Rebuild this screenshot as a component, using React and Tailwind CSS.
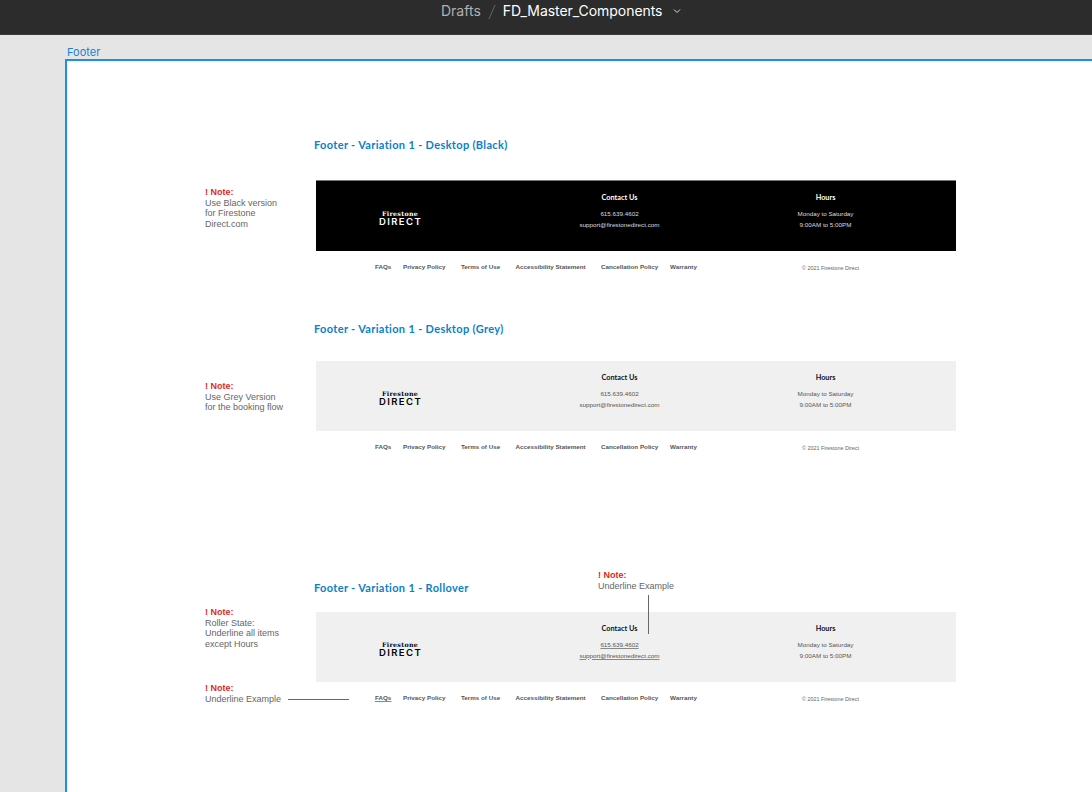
const sans = "font-['Liberation_Sans',Arial,sans-serif]";
const head = "font-['Lato','Open_Sans',sans-serif]";

function Logo({ light }) {
  return (
    <div className={`flex flex-col items-center leading-none gap-[1px] ${light ? "text-white" : "text-black"}`}>
      <span className="font-['DejaVu_Serif',serif] font-bold text-[6.3px] leading-[7px] tracking-[0.3px]">Firestone</span>
      <span className="font-['Inter',sans-serif] font-semibold text-[9.5px] leading-[8px] tracking-[1.4px] pl-[1px]">DIRECT</span>
    </div>
  );
}

function Bar({ variant, underline }) {
  const dark = variant === "dark";
  const t = dark ? "text-[#ddd]" : "text-[#555]";
  const h = dark ? "text-white" : "text-[#111]";
  const link = underline ? "underline underline-offset-1 decoration-[#888]" : "";
  return (
    <div className={`w-[640px] flex ${dark ? "h-[71px] bg-black border-t border-[#777]" : "h-[70px] bg-[#f0f0f0]"}`}>
      <div className="w-[168px] flex items-center justify-center pt-[3px]">
        <Logo light={dark} />
      </div>
      <div className="w-[271px] flex flex-col items-center pt-[12px]">
        <h3 className={`${head} ${h} font-bold text-[7.3px] leading-[10px]`}>Contact Us</h3>
        <p className={`${sans} ${t} text-[6.25px] leading-[11px] mt-[4.5px] ${link}`}>615.639.4602</p>
        <p className={`${sans} ${t} text-[6.25px] leading-[11px] ${link}`}>support@firestonedirect.com</p>
      </div>
      <div className="w-[141px] flex flex-col items-center pt-[12px]">
        <h3 className={`${head} ${h} font-bold text-[7.3px] leading-[10px]`}>Hours</h3>
        <p className={`${sans} ${t} text-[6.25px] leading-[11px] mt-[4.5px]`}>Monday to Saturday</p>
        <p className={`${sans} ${t} text-[6.25px] leading-[11px]`}>9:00AM to 5:00PM</p>
      </div>
    </div>
  );
}

function Links({ underline }) {
  const items = [
    ["FAQs", "w-[28px]"],
    ["Privacy Policy", "w-[58px]"],
    ["Terms of Use", "w-[54.5px]"],
    ["Accessibility Statement", "w-[85.5px]"],
    ["Cancellation Policy", "w-[69px]"],
    ["Warranty", "w-[132px]"],
  ];
  return (
    <div className={`${sans} flex items-start pl-[59px] mt-[12px] w-[640px] h-[12px] text-[#555]`}>
      {items.map(([label, w], i) => (
        <span
          key={label}
          className={`${w} shrink-0 font-bold text-[6.25px] leading-[8px] whitespace-nowrap ${
            underline && i === 0 ? "underline underline-offset-1 decoration-[#888]" : ""
          }`}
        >
          {label}
        </span>
      ))}
      <span className="text-[5.4px] leading-[8px] mt-[1px] text-[#666] whitespace-nowrap">© 2021 Firestone Direct</span>
    </div>
  );
}

function Note({ lines, className }) {
  return (
    <div className={`${sans} absolute text-[9px] leading-[10.7px] text-[#666] ${className}`}>
      <p className="font-bold text-[#e0281c]">! Note:</p>
      {lines.map((l) => (
        <p key={l} className="whitespace-nowrap">{l}</p>
      ))}
    </div>
  );
}

function Title({ children, className }) {
  return (
    <h2 className={`${head} absolute font-bold text-[11px] leading-[14px] tracking-[0.34px] text-[#0b80c8] whitespace-nowrap ${className}`}>
      {children}
    </h2>
  );
}

function Block({ className, variant, underline }) {
  return (
    <div className={`absolute left-[249px] ${className}`}>
      <Bar variant={variant} underline={underline} />
      <Links underline={underline} />
    </div>
  );
}

export default function App() {
  return (
    <div className="w-[1092px] h-[792px] overflow-hidden bg-[#e5e5e5] flex flex-col">
      <header className="h-[35px] shrink-0 bg-[#2c2c2c] border-b border-[#3a3a3a] flex items-start pl-[441px] pt-[2px] font-['Inter',sans-serif] text-[14px] leading-[17px]">
        <span className="text-[#b0b0b0]">Drafts</span>
        <svg width="8" height="16" viewBox="0 0 8 16" className="ml-[7px] mr-[7px] mt-[2px]">
          <path d="M7 1 1 15" stroke="#666" strokeWidth="1" fill="none" />
        </svg>
        <span className="text-white tracking-[-0.05px]">FD_Master_Components</span>
        <svg width="8" height="6" viewBox="0 0 8 6" className="ml-[11px] mt-[6px]">
          <path d="M1 1.5 4 4.5 7 1.5" stroke="#ddd" strokeWidth="1" fill="none" />
        </svg>
      </header>
      <div className="flex-1 min-h-0 pl-[65px] pt-[11px] flex flex-col">
        <div className="pl-[2px] font-['Inter',sans-serif] text-[11px] leading-[13px] text-[#1a7fd6] h-[13px]">Footer</div>
        <main className="relative flex-1 bg-white border-l-2 border-t-2 border-[#1c8fe8]">
          <Title className="left-[247px] top-[77px]">Footer - Variation 1 - Desktop (Black)</Title>
          <Note className="left-[138px] top-[126px]" lines={["Use Black version", "for Firestone", "Direct.com"]} />
          <Block className="top-[119px]" variant="dark" />

          <Title className="left-[247px] top-[261px]">Footer - Variation 1 - Desktop (Grey)</Title>
          <Note className="left-[138px] top-[320px]" lines={["Use Grey Version", "for the booking flow"]} />
          <Block className="top-[300px]" variant="grey" />

          <Title className="left-[247px] top-[520px]">Footer - Variation 1 - Rollover</Title>
          <Note className="left-[138px] top-[546px]" lines={["Roller State:", "Underline all items", "except Hours"]} />
          <Block className="top-[551px]" variant="grey" underline />
          <Note className="left-[138px] top-[622px]" lines={["Underline Example"]} />
          <div className="absolute left-[221px] top-[638px] w-[61px] h-px bg-[#666]" />
          <Note className="left-[531px] top-[509px]" lines={["Underline Example"]} />
          <div className="absolute left-[581px] top-[534px] w-px h-[39px] bg-[#666]" />
        </main>
      </div>
    </div>
  );
}
